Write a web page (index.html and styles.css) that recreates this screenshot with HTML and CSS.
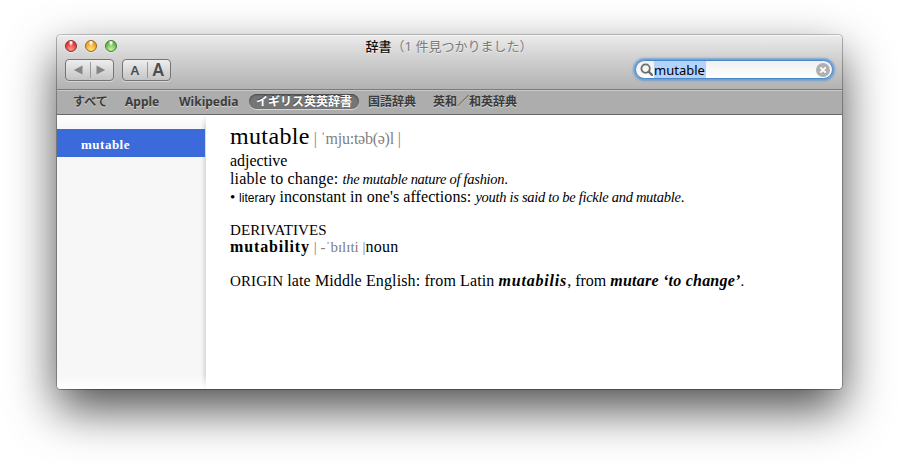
FILE: index.html
```html
<!DOCTYPE html>
<html lang="ja">
<head>
<meta charset="utf-8">
<title>辞書</title>
<link rel="stylesheet" href="styles.css">
</head>
<body>
<main class="window">
  <header class="titlebar">
    <div class="title-row">
      <div class="lights"><i class="light red"></i><i class="light amber"></i><i class="light green"></i></div>
      <h1 class="title">辞書<span>（1 件見つかりました）</span></h1>
    </div>
    <div class="tools">
      <div class="segment">
        <button><svg width="10" height="10" viewBox="0 0 10 10"><path d="M9.5 .6v8.8L.8 5z" fill="#858585"/></svg></button>
        <button><svg width="10" height="10" viewBox="0 0 10 10"><path d="M.5 .6v8.8L9.2 5z" fill="#858585"/></svg></button>
      </div>
      <div class="segment sizes"><button class="small">A</button><button class="large">A</button></div>
      <div class="search">
        <svg width="14" height="14" viewBox="0 0 14 14" fill="none" stroke="#6d6d6d"><circle cx="5.6" cy="5.6" r="4.2" stroke-width="1.8"/><path d="M8.7 8.7l3.3 3.3" stroke-width="2.4" stroke-linecap="round"/></svg>
        <span class="query">mutable</span>
        <svg class="clear" width="14" height="14" viewBox="0 0 14 14"><circle cx="7" cy="7" r="7" fill="#b0b0b0"/><path d="M4.3 4.3l5.4 5.4M9.7 4.3L4.3 9.7" stroke="#fff" stroke-width="1.8"/></svg>
      </div>
    </div>
  </header>
  <nav class="sources">
    <span class="all">すべて</span><span class="apple">Apple</span><span class="wiki">Wikipedia</span><span class="active">イギリス英英辞書</span><span class="koku">国語辞典</span><span>英和／和英辞典</span>
  </nav>
  <div class="content">
    <aside class="sidebar"><div class="result">mutable</div></aside>
    <article class="entry">
      <p class="headline"><span class="headword">mutable</span><span class="pron">| ˈmju:təb(ə)l |</span></p>
      <p class="pos">adjective</p>
      <p><span class="def1">liable to change: </span><em>the mutable nature of fashion</em>.</p>
      <p><span>• </span><span class="register">literary</span><span class="def2"> inconstant in one's affections: </span><em>youth is said to be fickle and mutable</em>.</p>
      <p class="gap caps">DERIVATIVES</p>
      <p class="deriv"><b>mutability</b><span class="pron small-pron"> | -ˈbɪlɪti |</span><span class="noun">noun</span></p>
      <p class="gap"><span class="caps">ORIGIN</span><span class="etym"> late Middle English: from Latin </span><b class="latin">mutabilis</b><span class="joint">, from </span><b class="latin phrase">mutare ‘to change’</b>.</p>
    </article>
  </div>
</main>
</body>
</html>
```
FILE: styles.css
```css
* { box-sizing: border-box; }
body { margin: 0; height: 468px; overflow: hidden; background: #fff; padding: 35px 57px; font-family: "Noto Sans", "Noto Sans CJK JP", sans-serif; }
.window { width: 785px; height: 354px; border-radius: 4px; background: #fff; box-shadow: 0 -1px 0 rgba(0,0,0,.2), 1px 0 0 rgba(0,0,0,.28), -1px 0 0 rgba(0,0,0,.28), 0 1px 0 rgba(0,0,0,.35), 0 20px 48px rgba(0,0,0,.7); }
.titlebar { height: 55px; border-radius: 4px 4px 0 0; background: linear-gradient(#ebebeb, #d5d5d5 35%, #b2b2b2); border-top: 1px solid #f7f7f7; border-bottom: 1px solid #7c7c7c; }
.title-row { height: 22px; display: flex; justify-content: center; position: relative; }
.lights { position: absolute; left: 8px; top: 4px; display: flex; gap: 8px; }
.light { width: 12px; height: 12px; border-radius: 50%; border: 1px solid; box-shadow: 0 1px 0 rgba(255,255,255,.5); }
.red { border-color: #8e2b28; background: radial-gradient(ellipse at 50% 15%, #fff 0 8%, transparent 32%), radial-gradient(circle at 50% 85%, #ff9b91, #e23a3c 65%); }
.amber { border-color: #9a6320; background: radial-gradient(ellipse at 50% 15%, #fff 0 8%, transparent 32%), radial-gradient(circle at 50% 85%, #ffe875, #eda32e 65%); }
.green { border-color: #44793a; background: radial-gradient(ellipse at 50% 15%, #fff 0 8%, transparent 32%), radial-gradient(circle at 50% 85%, #c7f59a, #65b94e 65%); }
.title { margin: 0 0 0 -1px; font: 500 13px/21px "Noto Sans", "Noto Sans CJK JP", sans-serif; color: #111; white-space: nowrap; text-shadow: 0 1px 0 rgba(255,255,255,.5); }
.title span { color: #7b7b7b; font-weight: 400; }
.tools { display: flex; align-items: flex-start; padding: 1px 8px 0; }
.segment { width: 49px; height: 22px; display: flex; margin-right: 8px; border: 1px solid #757575; border-radius: 4px; background: linear-gradient(#eee, #c4c4c4); box-shadow: 0 1px 0 rgba(255,255,255,.4); }
.segment button { flex: 1; padding: 0; border: 0; background: none; display: flex; align-items: center; justify-content: center; color: #4c4c4c; font: 500 13px/20px "Noto Sans", sans-serif; }
.segment button + button { position: relative; }
.segment button + button::before { content: ""; position: absolute; left: 0; top: 2px; height: 16px; width: 1px; background: #999; }
.sizes .small { font-size: 13px; font-weight: 600; }
.sizes .large { font-size: 17px; font-weight: 600; }
.search { width: 198px; height: 19px; margin: 1px 1px 0 auto; border-radius: 10px; display: flex; align-items: center; padding: 0 2px 0 4px; background: linear-gradient(#f0f0f0, #fff); border: 1px solid #4b88c8; box-shadow: 0 0 0 1px #6aa2dc, 0 0 2px 2px rgba(92,151,213,.75); }
.query { width: 52px; height: 17px; background: #b2d3fd; font-size: 13px; line-height: 18px; color: #000; white-space: nowrap; }
.clear { margin-left: auto; }
.sources { height: 25px; display: flex; align-items: flex-start; background: #adadad; border-top: 1px solid #c8c8c8; border-bottom: 1px solid #696969; padding: 3px 0 0 16px; font-size: 12px; line-height: 15px; font-weight: 700; color: #3c3c3c; text-shadow: 0 1px 0 rgba(255,255,255,.45); white-space: nowrap; }
.all { width: 52px; }
.apple { width: 54px; }
.wiki { width: 70px; }
.active { width: 110px; height: 15px; border-radius: 8px; background: #757575; color: #fff; text-align: center; text-shadow: 0 -1px 0 #444; box-shadow: inset 0 1px 2px #444, 0 1px 0 rgba(255,255,255,.5); margin-right: 9px; }
.koku { width: 65px; }
.content { display: flex; height: 274px; border-radius: 0 0 4px 4px; overflow: hidden; }
.sidebar { width: 149px; padding-top: 14px; background: linear-gradient(#fff, transparent 12px, transparent 260px, #fff), linear-gradient(90deg, #f7f7f7 144px, #d8d8d8); }
.result { width: 148px; height: 28px; padding-left: 24px; background: #3b6bdb; color: #fff; font: bold 13px/32px "Liberation Serif", serif; letter-spacing: .5px; }
.entry { flex: 1; padding: 9px 0 0 24px; font: 15px/18px "Liberation Serif", serif; color: #000; white-space: nowrap; background: #fff; }
.entry p { margin: 0; height: 18px; }
.entry p span { white-space: pre; }
.entry .headline { height: 28px; line-height: 25px; }
.headword { font-size: 24px; letter-spacing: .35px; }
.pron { color: #808080; font-size: 16px; margin-left: 4px; letter-spacing: -.25px; }
.pos { font-size: 16px; letter-spacing: -.05px; }
.def1, .def2, .noun, .etym, .joint { font-size: 16px; line-height: 1; }
.def1 { letter-spacing: .15px; }
.def2 { letter-spacing: .07px; }
.entry em { font-size: 14.5px; letter-spacing: -.29px; }
.register { font: 12px "Liberation Sans", sans-serif; letter-spacing: .05px; }
.entry .gap { margin-top: 15px; }
.caps { letter-spacing: .1px; }
.entry .deriv { height: 18px; line-height: 17px; }
.entry b { font-size: 16px; letter-spacing: .88px; line-height: 1; }
.small-pron { font-size: 15px; margin: 0; letter-spacing: 0; }
.noun { letter-spacing: .25px; }
.etym { letter-spacing: .12px; }
.joint { letter-spacing: 0; }
.entry .latin { font-style: italic; letter-spacing: .8px; }
.entry .phrase { letter-spacing: .23px; }
```
